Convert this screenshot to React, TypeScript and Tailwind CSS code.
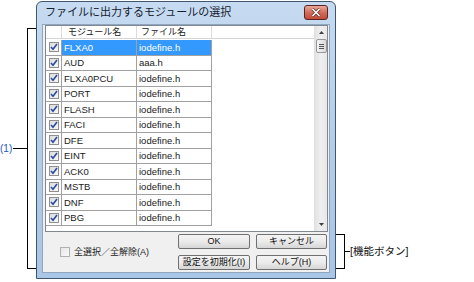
import React from 'react';

const rows = [
  { name: 'FLXA0', file: 'iodefine.h' },
  { name: 'AUD', file: 'aaa.h' },
  { name: 'FLXA0PCU', file: 'iodefine.h' },
  { name: 'PORT', file: 'iodefine.h' },
  { name: 'FLASH', file: 'iodefine.h' },
  { name: 'FACI', file: 'iodefine.h' },
  { name: 'DFE', file: 'iodefine.h' },
  { name: 'EINT', file: 'iodefine.h' },
  { name: 'ACK0', file: 'iodefine.h' },
  { name: 'MSTB', file: 'iodefine.h' },
  { name: 'DNF', file: 'iodefine.h' },
  { name: 'PBG', file: 'iodefine.h' },
];

const font = { fontFamily: '"Liberation Sans", "Noto Sans CJK JP", sans-serif' };

function CheckBox({ checked }: { checked: boolean }) {
  return (
    <div className="w-[10px] h-[10px] border border-[#8f8f8f] bg-gradient-to-br from-[#dcdcdc] to-[#f8f8f8] flex items-center justify-center">
      {checked && (
        <svg width="8" height="8" viewBox="0 0 8 8">
          <path d="M1 4 L3 6.2 L7 1" fill="none" stroke="#2a4a9c" strokeWidth="1.6" />
        </svg>
      )}
    </div>
  );
}

function Button({ label }: { label: string }) {
  return (
    <div className="h-[15px] border border-[#707070] rounded-[2px] bg-gradient-to-b from-[#f4f4f4] via-[#ebebeb] to-[#d6d6d6] flex items-center justify-center text-[9px] text-[#111] leading-none">
      {label}
    </div>
  );
}

function Dialog() {
  return (
    <div className="mt-[1px] w-[300px] h-[278px] border border-[#3e5670] rounded-t-[6px] bg-gradient-to-b from-[#c6dbf1] via-[#b4cde9] to-[#a9c6e6] flex flex-col px-[5px] pb-[5px]">
      {/* title bar */}
      <div className="h-[22px] flex items-start justify-between">
        <span className="pl-[3px] pt-[5px] text-[11px] leading-none text-[#15202e]">ファイルに出力するモジュールの選択</span>
        <div className="mt-[3px] mr-[2px] w-[24px] h-[15px] rounded-[3px] border border-[#5a2420] bg-gradient-to-b from-[#e8a89a] via-[#d26d5c] to-[#c24a38] flex items-center justify-center">
          <svg width="10" height="9" viewBox="0 0 10 9">
            <path d="M1.5 1 L8.5 8 M8.5 1 L1.5 8" stroke="#5a2a24" strokeWidth="3" />
            <path d="M1.5 1 L8.5 8 M8.5 1 L1.5 8" stroke="#fff" strokeWidth="1.6" />
          </svg>
        </div>
      </div>

      {/* client */}
      <div className="flex-1 bg-[#f0f0f0] border border-[#8fa6c1] flex flex-col pl-[2px] pr-[1px] pt-0">
        {/* list */}
        <div className="h-[207px] bg-white border border-[#828790] flex">
          <div className="flex-1 flex flex-col">
            <div className="h-[13px] flex border-b border-[#d5d5d5] text-[9px] text-[#222] leading-none">
              <div className="w-[16px] border-r border-[#dcdcdc]" />
              <div className="w-[75px] border-r border-[#dcdcdc] pl-[6px] flex items-center">モジュール名</div>
              <div className="w-[75px] border-r border-[#dcdcdc] pl-[4px] flex items-center">ファイル名</div>
            </div>
            <div className="h-[1px]" />
            {rows.map((r, i) => (
              <div key={r.name} className="h-[15.5px] flex text-[9.5px] leading-none">
                <div className="w-[16px] border-r border-b border-[#a0a0a0] flex items-center justify-center">
                  <CheckBox checked />
                </div>
                <div className={`w-[75px] border-r border-b border-[#a0a0a0] pl-[2px] flex items-center ${i === 0 ? 'bg-[#3399ff] text-white' : 'text-[#1a1a1a]'}`}>
                  {r.name}
                </div>
                <div className={`w-[75px] border-r border-b border-[#a0a0a0] pl-[2px] flex items-center ${i === 0 ? 'bg-[#3399ff] text-white' : 'text-[#1a1a1a]'}`}>
                  {r.file}
                </div>
              </div>
            ))}
          </div>
          {/* scrollbar */}
          <div className="w-[13px] bg-gradient-to-r from-[#e3e3e3] via-[#efefef] to-[#e8e8e8] border-l border-[#e0e0e0] flex flex-col items-center">
            <div className="h-[13px] flex items-center justify-center">
              <svg width="5" height="3" viewBox="0 0 5 3"><path d="M0 3 L2.5 0 L5 3 Z" fill="#404040" /></svg>
            </div>
            <div className="w-[11px] h-[14px] border border-[#979797] rounded-[2px] bg-gradient-to-r from-[#f4f4f4] to-[#dadada] flex flex-col items-center justify-center gap-[1px]">
              <div className="w-[5px] h-px bg-[#555]" />
              <div className="w-[5px] h-px bg-[#555]" />
              <div className="w-[5px] h-px bg-[#555]" />
            </div>
            <div className="flex-1" />
            <div className="h-[13px] flex items-center justify-center">
              <svg width="5" height="3" viewBox="0 0 5 3"><path d="M0 0 L2.5 3 L5 0 Z" fill="#404040" /></svg>
            </div>
          </div>
        </div>

        {/* bottom controls */}
        <div className="flex-1 flex items-center pr-[1px]">
          <div className="flex-1 flex items-center gap-[4px] pl-[15px] text-[9px] text-[#222] leading-none">
            <div className="w-[10px] h-[10px] border border-[#b0b0b0] bg-gradient-to-br from-[#e6e6e6] to-[#fafafa]" />
            <span>全選択／全解除(A)</span>
          </div>
          <div className="grid grid-cols-[72px_71px] gap-x-[6px] gap-y-[6px]">
            <Button label="OK" />
            <Button label="キャンセル" />
            <Button label="設定を初期化(I)" />
            <Button label="ヘルプ(H)" />
          </div>
        </div>
      </div>
    </div>
  );
}

export default function App() {
  return (
    <div className="w-[474px] h-[282px] bg-white flex" style={font}>
      {/* (1) annotation */}
      <div className="w-[36px] pt-[28px] flex items-start">
        <div className="flex items-center">
          <span className="w-[13px] text-[10px] leading-none text-[#1a56c4]">(1)</span>
          <div className="w-[14px] h-px bg-black" />
          <div className="w-[9px] h-[241px] border-l border-y border-black" />
        </div>
      </div>

      <Dialog />

      {/* function button annotation */}
      <div className="pt-[234px] flex items-start">
        <div className="flex items-center">
          <div className="w-[9px] h-[35px] border-r border-y border-black" />
          <div className="w-[5px] h-px bg-black" />
          <span className="text-[10.5px] leading-none text-[#111]">[機能ボタン]</span>
        </div>
      </div>
    </div>
  );
}
